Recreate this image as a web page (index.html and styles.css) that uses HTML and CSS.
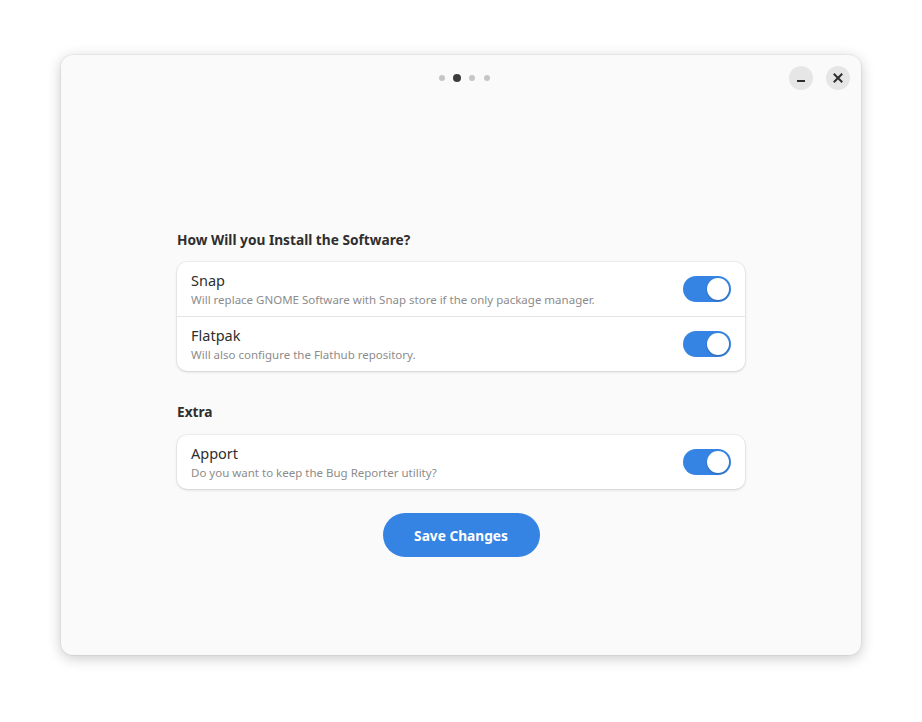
FILE: index.html
```html
<!DOCTYPE html>
<html>
<head>
<meta charset="utf-8">
<link rel="stylesheet" href="styles.css">
</head>
<body>
<div class="window">
  <div class="header">
    <div class="dots">
      <span class="dot"></span>
      <span class="dot active"></span>
      <span class="dot"></span>
      <span class="dot"></span>
    </div>
    <div class="controls">
      <button class="wbtn" aria-label="Minimize">
        <svg width="16" height="16" viewBox="0 0 16 16"><rect x="4" y="10" width="8" height="2" fill="#2e2e2e"/></svg>
      </button>
      <button class="wbtn" aria-label="Close">
        <svg width="16" height="16" viewBox="0 0 16 16"><path d="M4.5 4.5 L11.5 11.5 M11.5 4.5 L4.5 11.5" stroke="#2e2e2e" stroke-width="2" stroke-linecap="square"/></svg>
      </button>
    </div>
  </div>
  <div class="content">
    <h2 class="heading">How Will you Install the Software?</h2>
    <div class="card">
      <div class="row">
        <div class="text">
          <div class="title">Snap</div>
          <div class="subtitle">Will replace GNOME Software with Snap store if the only package manager.</div>
        </div>
        <div class="switch on"><span class="knob"></span></div>
      </div>
      <div class="row">
        <div class="text">
          <div class="title">Flatpak</div>
          <div class="subtitle">Will also configure the Flathub repository.</div>
        </div>
        <div class="switch on"><span class="knob"></span></div>
      </div>
    </div>
    <h2 class="heading second">Extra</h2>
    <div class="card">
      <div class="row">
        <div class="text">
          <div class="title">Apport</div>
          <div class="subtitle">Do you want to keep the Bug Reporter utility?</div>
        </div>
        <div class="switch on"><span class="knob"></span></div>
      </div>
    </div>
    <div class="actions">
      <button class="save">Save Changes</button>
    </div>
  </div>
</div>
</body>
</html>
```

FILE: styles.css
```css
* { box-sizing: border-box; }
html, body { margin: 0; background: #ffffff; }
body {
  padding: 55px 61px;
  font-family: "Noto Sans", "Open Sans", sans-serif;
}
.window {
  width: 800px;
  height: 600px;
  background: #fafafa;
  border-radius: 12px;
  box-shadow: 0 3px 14px rgba(0,0,0,0.22), 0 0 0 1px rgba(0,0,0,0.04);
  display: flex;
  flex-direction: column;
}
.header {
  height: 46px;
  position: relative;
  display: flex;
  align-items: center;
  justify-content: center;
}
.dots {
  display: flex;
  align-items: center;
  gap: 9px;
  margin-left: 7px;
}
.dot {
  width: 6px;
  height: 6px;
  border-radius: 50%;
  background: #c6c6c6;
}
.dot.active {
  width: 8px;
  height: 8px;
  margin: 0 -1px;
  background: #3c3c3c;
}
.controls {
  position: absolute;
  right: 11px;
  top: 11px;
  display: flex;
  gap: 13px;
}
.wbtn {
  width: 24px;
  height: 24px;
  border-radius: 50%;
  border: none;
  padding: 0;
  background: #e6e6e6;
  display: flex;
  align-items: center;
  justify-content: center;
}
.content {
  width: 568px;
  margin: 0 auto;
  padding-top: 129px;
  display: flex;
  flex-direction: column;
}
.heading {
  margin: 0 0 12px 0;
  font-size: 13.7px;
  line-height: 20px;
  font-weight: 700;
  color: #2e2e2e;
}
.heading.second {
  margin-top: 31px;
  margin-bottom: 13px;
}
.card {
  background: #ffffff;
  border-radius: 10px;
  box-shadow: 0 1px 3px rgba(0,0,0,0.14), 0 0 0 1px rgba(0,0,0,0.035);
}
.row {
  height: 54px;
  padding: 0 14px;
  display: flex;
  align-items: center;
  justify-content: space-between;
}
.row + .row { border-top: 1px solid #e4e4e4; height: 55px; }
.text { display: flex; flex-direction: column; }
.title {
  font-size: 14.5px;
  line-height: 20px;
  color: #2e2e2e;
  margin-top: -1px;
}
.subtitle {
  font-size: 11.5px;
  line-height: 16px;
  color: #8c8c8c;
  margin-top: 2px;
}
.switch {
  width: 48px;
  height: 26px;
  border-radius: 13px;
  background: #3584e4;
  position: relative;
}
.knob {
  position: absolute;
  top: 2px;
  right: 2px;
  width: 22px;
  height: 22px;
  border-radius: 50%;
  background: #ffffff;
  box-shadow: 0 1px 2px rgba(0,0,0,0.25);
}
.actions {
  display: flex;
  justify-content: center;
  margin-top: 24px;
}
.save {
  width: 157px;
  height: 44px;
  border: none;
  border-radius: 22px;
  background: #3584e4;
  color: #ffffff;
  font-family: "Noto Sans", "Open Sans", sans-serif;
  font-size: 13.7px;
  font-weight: 700;
}
```
